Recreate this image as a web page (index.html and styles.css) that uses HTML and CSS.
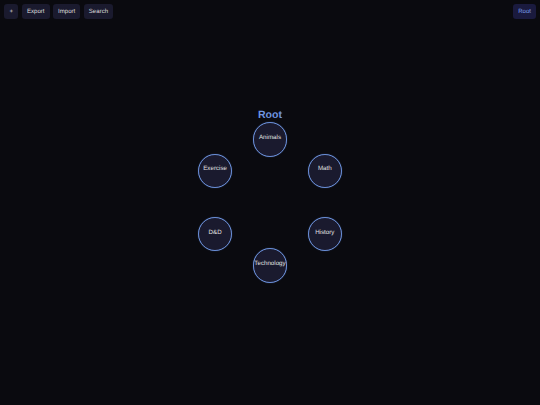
FILE: index.html
```html
<!DOCTYPE html>
<html lang="en">
<head>
  <meta charset="UTF-8">
  <meta name="viewport" content="width=device-width, initial-scale=1.0">
  <title>Mind Map</title>
  <link rel="stylesheet" href="styles.css">
</head>
<body>

  <div class="toolbar">
    <div class="actions">
      <button class="button button-add">+</button>
      <button class="button">Export</button>
      <button class="button">Import</button>
      <button class="button">Search</button>
    </div>
    <button class="button crumb">Root</button>
  </div>

  <!-- Map -->
  <div class="map">
    <div class="map-title">Root</div>
    <div class="node node-animals"><span>Animals</span></div>
    <div class="node node-math"><span>Math</span></div>
    <div class="node node-history"><span>History</span></div>
    <div class="node node-technology"><span>Technology</span></div>
    <div class="node node-dnd"><span>D&amp;D</span></div>
    <div class="node node-exercise"><span>Exercise</span></div>
  </div>

</body>
</html>
```

FILE: styles.css
```css
body {
  margin: 0;
  width: 540px;
  height: 405px;
  overflow: hidden;
  background-color: #0a0a0f;
  font-family: "Liberation Sans", Arial, sans-serif;
  color: #e0e0e0;
  text-rendering: geometricPrecision;
}
.toolbar {
  display: flex;
  justify-content: space-between;
  align-items: flex-start;
  padding: 4px 4px 0;
}
.actions {
  display: flex;
  gap: 3.5px;
}
.button {
  height: 15px;
  padding: 0 5px;
  background: #1a1a2e;
  color: #dcdcdc;
  border: none;
  border-radius: 3px;
  font-family: inherit;
  font-size: 6.1px;
  line-height: 15px;
  text-rendering: geometricPrecision;
}
.button-add {
  width: 14.4px;
  padding: 0;
}
.crumb {
  background: #1a1a3e;
  color: #7b9fe8;
}
.map {
  position: relative;
  width: 540px;
  height: 386px;
}
.map-title {
  position: absolute;
  left: 220px;
  top: 90px;
  width: 100px;
  text-align: center;
  font-size: 10.5px;
  font-weight: bold;
  color: #6f94e0;
}
.node {
  position: absolute;
  box-sizing: border-box;
  width: 34.5px;
  height: 34.5px;
  display: flex;
  align-items: center;
  justify-content: center;
  background: #1a1a2e;
  border: 1px solid #6a8fd8;
  box-shadow: 0 0 1px rgba(106, 143, 216, 0.6);
  border-radius: 50%;
  font-size: 6.2px;
  white-space: nowrap;
}
.node span {
  margin-top: -4px;
}
.node-animals { left: 252.75px; top: 103px; }
.node-math { left: 307.55px; top: 134.5px; }
.node-history { left: 307.55px; top: 197.9px; }
.node-technology { left: 252.75px; top: 229.25px; }
.node-dnd { left: 197.85px; top: 197.9px; }
.node-exercise { left: 197.85px; top: 134.5px; }
```
